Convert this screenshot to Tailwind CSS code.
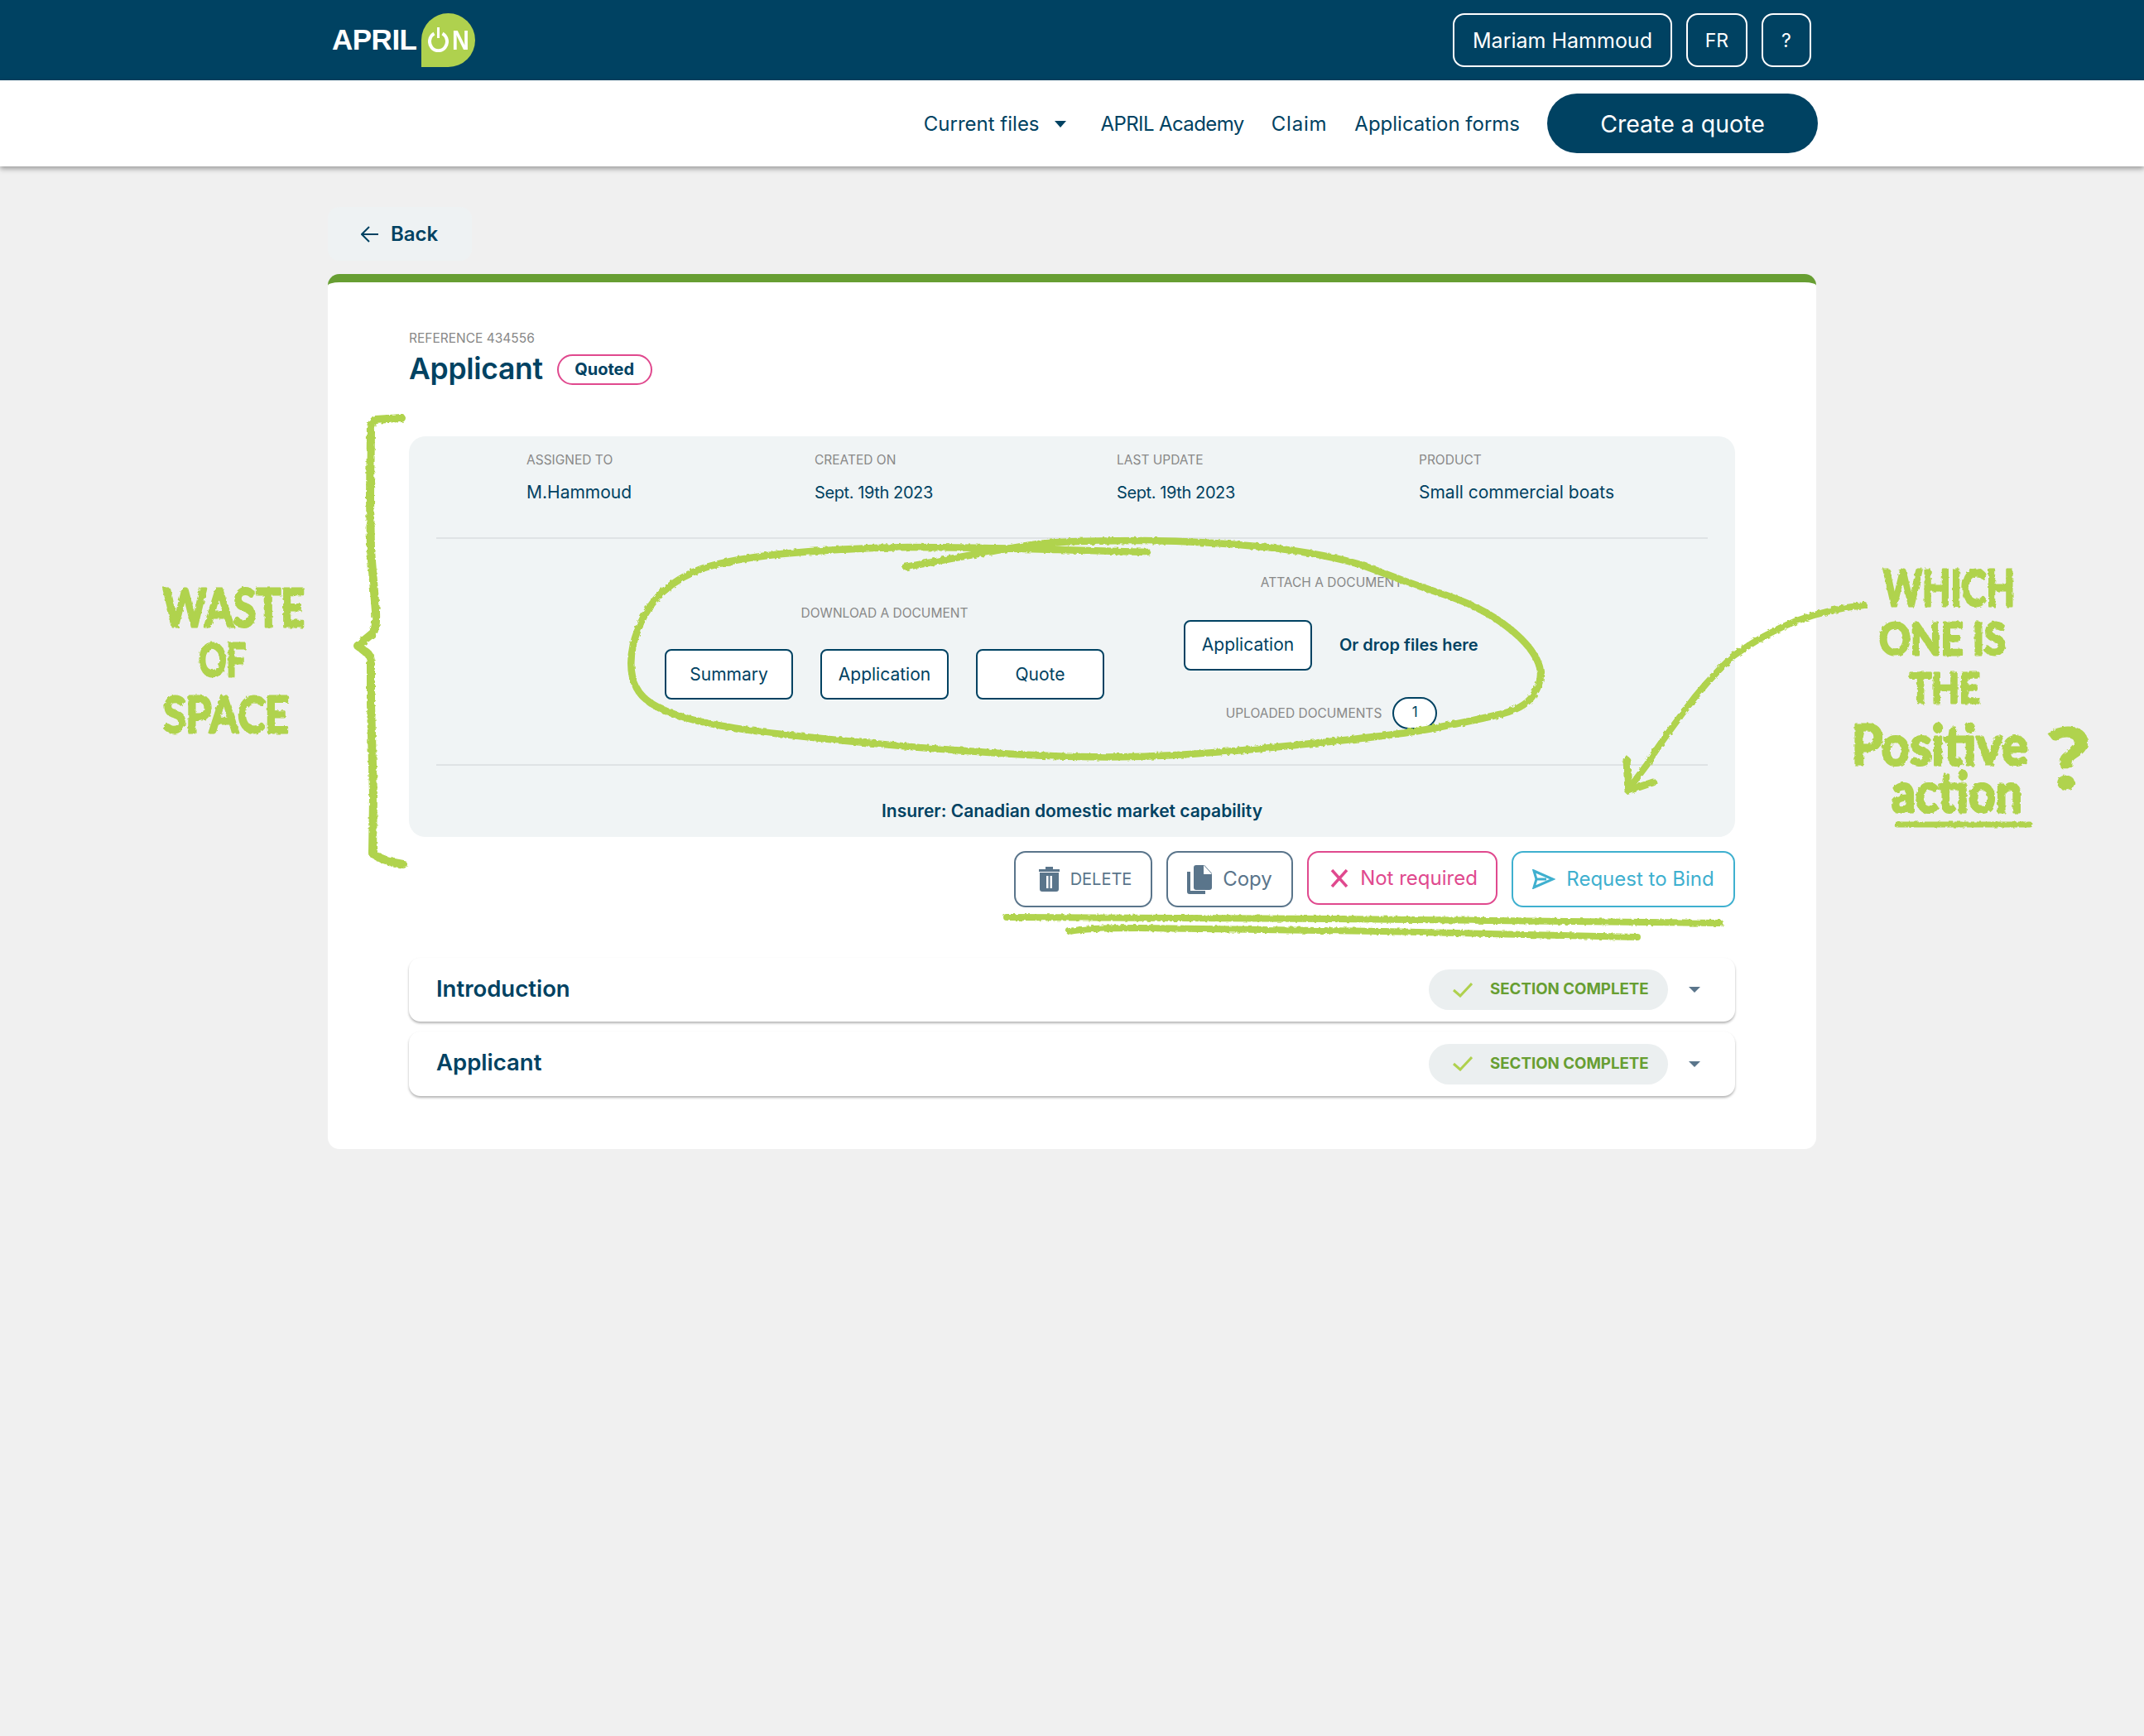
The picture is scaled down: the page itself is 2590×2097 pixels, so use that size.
<!DOCTYPE html>
<html lang="en">
<head>
  <meta charset="UTF-8" />
  <title>APRIL ON - Applicant</title>
  <script src="https://cdn.jsdelivr.net/npm/@tailwindcss/browser@4"></script>
</head>
<body class="relative w-[2590px] h-[2097px] overflow-hidden bg-[#f0f0f0] font-['Inter',sans-serif] text-[#004262]">

  <!-- top bar -->
  <header class="h-[97px] bg-[#004262] flex items-center justify-between pl-[401px] pr-[402px]">
    <div class="flex items-center">
      <span class="font-['Liberation_Sans',sans-serif] font-bold text-[35px] text-white tracking-[-0.5px] w-[108px]">APRIL</span>
      <div class="w-[65px] h-[65px] bg-[#afd14e] rounded-[50%_50%_50%_0] flex items-center pl-[8px] gap-[4px]">
        <svg class="mb-[2px]" width="25" height="30" viewBox="0 0 25 30" fill="none" stroke="white" stroke-width="4"><path d="M7.500 7.500A10.500 11 0 1 0 17.500 7.500" /><path d="M12.500 0v13" stroke-width="3" /></svg>
        <span class="font-['Liberation_Sans',sans-serif] font-bold text-[34px] text-white scale-x-[0.85] origin-left">N</span>
      </div>
    </div>
    <div class="flex gap-[17px] text-[25px] text-white">
      <button class="w-[265px] h-[65px] pt-[2px] border-2 border-white rounded-[14px]">Mariam Hammoud</button>
      <button class="w-[74px] h-[65px] pt-[2px] text-[23px] border-2 border-white rounded-[14px]">FR</button>
      <button class="w-[60px] h-[65px] pt-[2px] text-[23px] border-2 border-white rounded-[14px]">?</button>
    </div>
  </header>

  <!-- nav -->
  <nav class="h-[104px] pt-[2px] bg-white shadow-[0_3px_6px_rgba(0,0,0,0.35)] flex items-center justify-end pr-[394px] text-[24px]">
    <span>Current files</span>
    <svg class="ml-[18px] mr-[42px]" width="14" height="8" viewBox="0 0 14 8" fill="#004262"><path d="M0 0h14L7 8z" /></svg>
    <span class="tracking-[-0.6px]">APRIL Academy</span>
    <span class="ml-[33px] tracking-[0.8px]">Claim</span>
    <span class="ml-[33px]">Application forms</span>
    <button class="ml-[33px] mb-[2px] w-[327px] h-[72px] pt-[2px] rounded-full bg-[#004262] text-white text-[28.5px]">Create a quote</button>
  </nav>

  <main class="ml-[396px] w-[1798px] pt-[49px]">
    <button class="w-[174px] h-[65px] pt-[1px] rounded-[14px] bg-[#eef2f3] flex items-center pl-[40px] gap-[15px] font-semibold text-[24px]">
      <svg width="21" height="20" viewBox="0 0 21 20" fill="none" stroke="#004262" stroke-width="2"><path d="M21 10H2M10 1l-9 9 9 9" /></svg>
      Back
    </button>

    <section class="mt-[16px] h-[1057px] bg-white rounded-[14px] border-t-[10px] border-[#679e32] px-[98px] pt-[59px]">
      <p class="text-[15.5px] leading-[18px] text-[#888] uppercase">Reference 434556</p>
      <div class="mt-[7px] flex items-center gap-[17px]">
        <h1 class="text-[35.500px] leading-[42px] font-semibold tracking-[-0.3px]">Applicant</h1>
        <span class="w-[115px] h-[37px] border-2 border-[#e0498e] rounded-full flex items-center justify-center text-[20px] font-bold">Quoted</span>
      </div>

      <!-- info panel -->
      <div class="mt-[60px] h-[484px] rounded-[20px] bg-[#f0f4f5] px-[33px]">
        <div class="h-[124px] border-b-2 border-[#dfe3e5] grid grid-cols-[347px_365px_365px_1fr] pl-[109px] pt-[20px]">
          <div><p class="text-[15.5px] leading-[18px] text-[#888] uppercase">Assigned to</p><p class="mt-[17px] text-[21px] leading-[26px]">M.Hammoud</p></div>
          <div class="ml-[1px]"><p class="text-[15.5px] leading-[18px] text-[#888] uppercase">Created on</p><p class="mt-[17px] text-[20px] leading-[26px] tracking-[-0.4px]">Sept. 19th 2023</p></div>
          <div class="ml-[1px]"><p class="text-[15.5px] leading-[18px] text-[#888] uppercase">Last update</p><p class="mt-[17px] text-[20px] leading-[26px] tracking-[-0.4px]">Sept. 19th 2023</p></div>
          <div class="ml-[1px]"><p class="text-[15.5px] leading-[18px] text-[#888] uppercase">Product</p><p class="mt-[17px] text-[21px] leading-[26px]">Small commercial boats</p></div>
        </div>

        <div class="h-[274px] border-b-2 border-[#dfe3e5] flex items-center justify-center gap-[96px]">
          <div class="flex flex-col items-center">
            <p class="mt-[2px] text-[15.5px] leading-[20px] text-[#888] uppercase">Download a document</p>
            <div class="mt-[33px] flex gap-[33px] text-[21px]">
              <button class="w-[155px] h-[61px] bg-white border-2 border-[#004262] rounded-[8px]">Summary</button>
              <button class="w-[155px] h-[61px] bg-white border-2 border-[#004262] rounded-[8px]">Application</button>
              <button class="w-[155px] h-[61px] bg-white border-2 border-[#004262] rounded-[8px]">Quote</button>
            </div>
          </div>
          <div class="flex flex-col items-center w-[357px]">
            <p class="text-[15.5px] leading-[20px] text-[#888] uppercase">Attach a document</p>
            <div class="mt-[35px] w-full flex items-center gap-[33px] text-[21px]">
              <button class="w-[155px] h-[61px] shrink-0 bg-white border-2 border-[#004262] rounded-[8px]">Application</button>
              <span class="text-[20px] font-semibold whitespace-nowrap">Or drop files here</span>
            </div>
            <div class="mt-[32px] flex items-center gap-[13px]">
              <span class="mt-[2px] text-[15.5px] text-[#888] uppercase">Uploaded documents</span>
              <span class="w-[54px] h-[39px] bg-white border-2 border-[#004262] rounded-full flex items-center justify-center text-[17px]">1</span>
            </div>
          </div>
        </div>

        <p class="mt-[42px] text-center text-[21px] leading-[26px] font-semibold">Insurer: Canadian domestic market capability</p>
      </div>

      <!-- actions -->
      <div class="mt-[17px] flex justify-end items-start gap-[17px] text-[24px]">
        <button class="w-[167px] h-[68px] flex items-center justify-center gap-[12px] pl-[4px] border-2 border-[#5a758b] rounded-[14px] text-[#5a758b] text-[20px]">
          <svg width="27" height="30" viewBox="0 0 27 30" fill="#5a758b"><path d="M1 3h8V0h9v3h8v3H1zM2 7h23v20a3 3 0 0 1-3 3H5a3 3 0 0 1-3-3z" /><path d="M10 11h2.500v15H10zM14.500 11H17v15h-2.500z" fill="white" /></svg>
          DELETE
        </button>
        <button class="w-[153px] h-[68px] flex items-center justify-center gap-[13px] border-2 border-[#5a758b] rounded-[14px] text-[#5a758b]">
          <svg width="30" height="35" viewBox="0 0 30 35" fill="#5a758b"><path d="M8 3a3 3 0 0 1 3-3h10l9 10v17a3 3 0 0 1-3 3H11a3 3 0 0 1-3-3z" /><path d="M20 0v11h10z" fill="white" /><path d="M0 8h4v23h18v4H3a3 3 0 0 1-3-3z" /></svg>
          Copy
        </button>
        <button class="w-[230px] h-[65px] flex items-center justify-center gap-[14px] pl-[4px] border-2 border-[#e0498e] rounded-[14px] text-[#e0498e]">
          <svg width="22" height="22" viewBox="0 0 22 22" fill="none" stroke="#e0498e" stroke-width="3.500"><path d="M2 1l18 20M20 1L2 21" /></svg>
          Not required
        </button>
        <button class="w-[270px] h-[68px] flex items-center justify-center gap-[13px] border-2 border-[#3fb0cf] rounded-[14px] text-[#3fb0cf]">
          <svg width="28" height="24" viewBox="0 0 28 24" fill="none" stroke="#3fb0cf" stroke-width="3"><path d="M2 2l23 10L2 22l3-10zM5 12h12" /></svg>
          Request to Bind
        </button>
      </div>

      <!-- sections -->
      <div class="mt-[61px] flex flex-col gap-[12px]">
        <div class="h-[77px] rounded-[14px] bg-white shadow-[0_2px_3px_rgba(0,0,0,0.3)] flex items-center pl-[33px] pr-[42px]">
          <h2 class="mb-[2px] text-[27.500px] font-semibold">Introduction</h2>
          <span class="ml-auto w-[289px] h-[49px] rounded-full bg-[#ebeff0] flex items-center pl-[29px] gap-[21px] text-[18.700px] font-bold text-[#679e32]">
            <svg width="24" height="18" viewBox="0 0 24 18" fill="none" stroke="#afd14e" stroke-width="3"><path d="M1 9l8 7L23 1" /></svg>
            SECTION COMPLETE
          </span>
          <svg class="ml-[25px]" width="14" height="7" viewBox="0 0 14 7" fill="#5a758b"><path d="M0 0h14L7 7z" /></svg>
        </div>
        <div class="h-[78px] rounded-[14px] bg-white shadow-[0_2px_3px_rgba(0,0,0,0.3)] flex items-center pl-[33px] pr-[42px]">
          <h2 class="mb-[2px] text-[27.500px] font-semibold">Applicant</h2>
          <span class="ml-auto w-[289px] h-[49px] rounded-full bg-[#ebeff0] flex items-center pl-[29px] gap-[21px] text-[18.700px] font-bold text-[#679e32]">
            <svg width="24" height="18" viewBox="0 0 24 18" fill="none" stroke="#afd14e" stroke-width="3"><path d="M1 9l8 7L23 1" /></svg>
            SECTION COMPLETE
          </span>
          <svg class="ml-[25px]" width="14" height="7" viewBox="0 0 14 7" fill="#5a758b"><path d="M0 0h14L7 7z" /></svg>
        </div>
      </div>
    </section>
  </main>

  <!-- green review scribbles lying over the page -->
  <svg class="absolute left-0 top-0 pointer-events-none" width="2590" height="2097" viewBox="0 0 2590 2097" fill="none" stroke="#b0d34e" stroke-linecap="round" stroke-linejoin="round">
    <defs>
      <filter id="rough" x="-5%" y="-5%" width="110%" height="110%">
        <feTurbulence type="fractalNoise" baseFrequency="0.22" numOctaves="2" seed="4" />
        <feDisplacementMap in="SourceGraphic" scale="4" />
      </filter>
    </defs>
    <g filter="url(#rough)">
      <!-- loop round the documents -->
      <path stroke-width="8.500" d="M1094 685Q1217 662 1254 657Q1292 653 1382 653Q1472 654 1547 663Q1623 673 1660 688Q1698 703 1735 715Q1773 727 1795 740Q1818 753 1837 771Q1856 790 1860 806Q1864 823 1852 840Q1841 857 1807 864Q1773 872 1735 879Q1698 887 1585 898Q1472 910 1397 913Q1322 917 1209 910Q1096 903 983 891Q870 880 825 866Q780 853 769 831Q758 810 765 778Q773 747 791 725Q810 703 840 690Q870 677 945 669Q1021 662 1096 661Q1171 661 1278 664L1386 667" />
      <!-- brace -->
      <path stroke-width="10" d="M485 505L453 507Q447 512 448 521L447 600L448 665L454 739Q455 760 450 765L432 780L445 790Q448 794 448 800L448 850L451 961L450 1031Q462 1040 487 1044" />
      <!-- arrow -->
      <path stroke-width="8" d="M2252 731C2215 735 2192 742 2170 750C2140 762 2118 775 2093 793C2070 815 2052 835 2036 857C2015 885 2000 905 1990 923L1972 947" />
      <path stroke-width="9" d="M1965 918L1967 955L1997 945" />
      <!-- underlines -->
      <path stroke-width="8" d="M1216 1108L1611 1110L2078 1115" />
      <path stroke-width="8" d="M1292 1125Q1310 1121 1376 1121L1669 1125L1978 1132" />
      <path stroke-width="7" d="M2292 996L2452 996" />
      <!-- notes -->
      <g fill="#b0d34e" stroke-width="3" font-family="Lato, sans-serif" font-weight="700">
        <text x="197" y="757" font-size="64" textLength="171" lengthAdjust="spacingAndGlyphs">WASTE</text>
        <text x="240" y="817" font-size="56" textLength="57" lengthAdjust="spacingAndGlyphs">OF</text>
        <text x="197" y="885" font-size="62" textLength="152" lengthAdjust="spacingAndGlyphs">SPACE</text>
        <text x="2275" y="732" font-size="62" textLength="159" lengthAdjust="spacingAndGlyphs">WHICH</text>
        <text x="2270" y="791" font-size="54" textLength="153" lengthAdjust="spacingAndGlyphs">ONE IS</text>
        <text x="2307" y="849" font-size="50" textLength="85" lengthAdjust="spacingAndGlyphs">THE</text>
        <text x="2237" y="924" font-size="66" textLength="213" lengthAdjust="spacingAndGlyphs">Positive</text>
        <text x="2472" y="952" font-size="100" textLength="53" lengthAdjust="spacingAndGlyphs">?</text>
        <text x="2285" y="981" font-size="66" textLength="158" lengthAdjust="spacingAndGlyphs">action</text>
      </g>
    </g>
  </svg>
</body>
</html>
